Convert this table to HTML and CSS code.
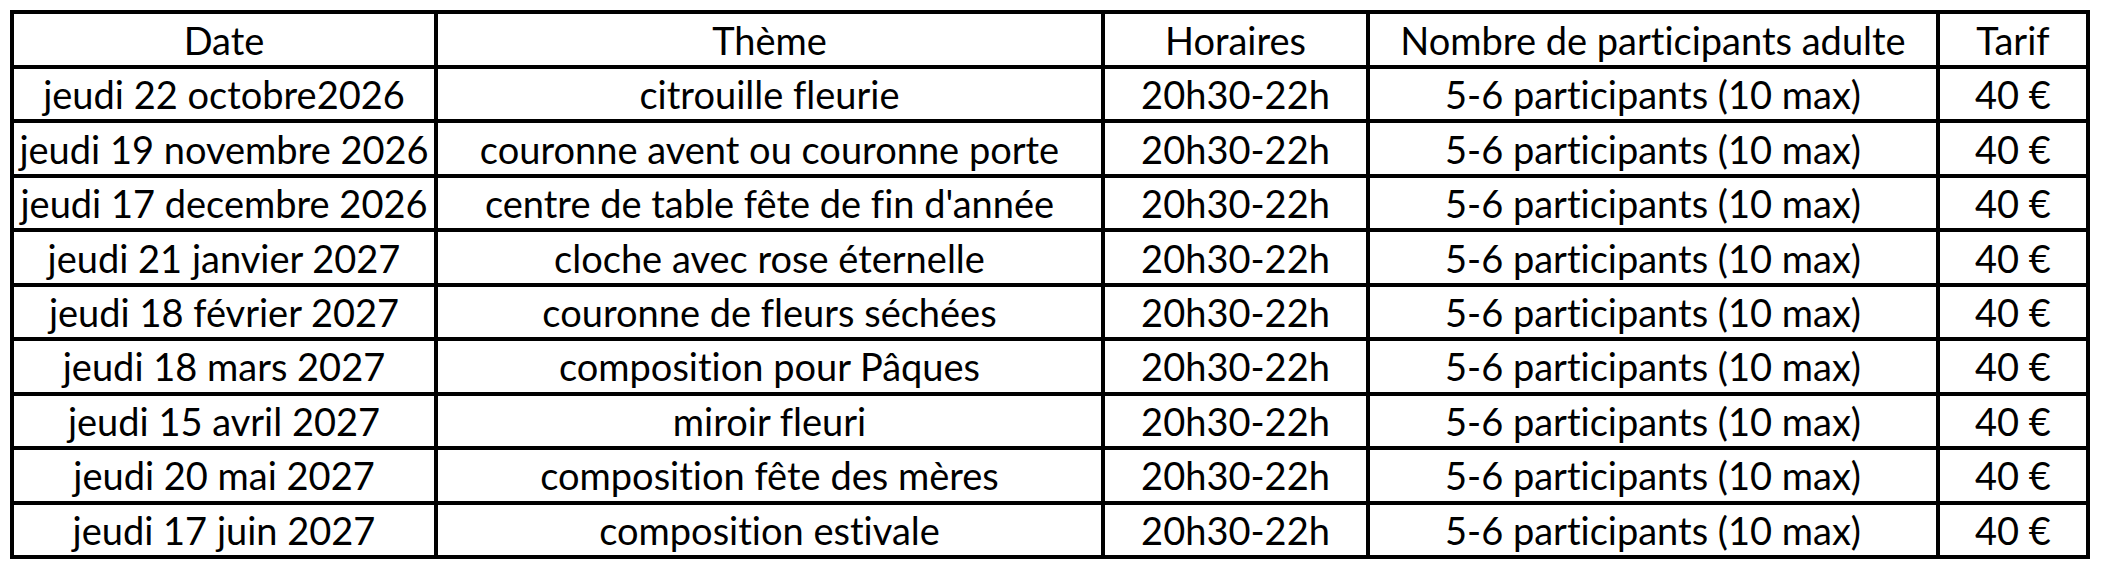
FILE: index.html
```html
<!DOCTYPE html>
<html lang="fr">
<head>
<meta charset="utf-8">
<title>Ateliers</title>
<link rel="stylesheet" href="styles.css">
</head>
<body>
<div class="page">
<table class="planning">
  <colgroup>
    <col class="c-date"><col class="c-theme"><col class="c-hor"><col class="c-nb"><col class="c-tarif">
  </colgroup>
  <thead>
    <tr><th>Date</th><th>Thème</th><th>Horaires</th><th>Nombre de participants adulte</th><th>Tarif</th></tr>
  </thead>
  <tbody>
    <tr><td>jeudi 22 octobre2026</td><td>citrouille fleurie</td><td>20h30-22h</td><td>5-6 participants (10 max)</td><td>40 €</td></tr>
    <tr><td>jeudi 19 novembre 2026</td><td>couronne avent ou couronne porte</td><td>20h30-22h</td><td>5-6 participants (10 max)</td><td>40 €</td></tr>
    <tr><td>jeudi 17 decembre 2026</td><td>centre de table fête de fin d'année</td><td>20h30-22h</td><td>5-6 participants (10 max)</td><td>40 €</td></tr>
    <tr><td>jeudi 21 janvier 2027</td><td>cloche avec rose éternelle</td><td>20h30-22h</td><td>5-6 participants (10 max)</td><td>40 €</td></tr>
    <tr><td>jeudi 18 février 2027</td><td>couronne de fleurs séchées</td><td>20h30-22h</td><td>5-6 participants (10 max)</td><td>40 €</td></tr>
    <tr><td>jeudi 18 mars 2027</td><td>composition pour Pâques</td><td>20h30-22h</td><td>5-6 participants (10 max)</td><td>40 €</td></tr>
    <tr><td>jeudi 15 avril 2027</td><td>miroir fleuri</td><td>20h30-22h</td><td>5-6 participants (10 max)</td><td>40 €</td></tr>
    <tr><td>jeudi 20 mai 2027</td><td>composition fête des mères</td><td>20h30-22h</td><td>5-6 participants (10 max)</td><td>40 €</td></tr>
    <tr><td>jeudi 17 juin 2027</td><td>composition estivale</td><td>20h30-22h</td><td>5-6 participants (10 max)</td><td>40 €</td></tr>
  </tbody>
</table>
</div>
</body>
</html>
```
FILE: styles.css
```css
html, body {
  margin: 0;
  padding: 0;
  background: #fff;
}
.page {
  padding: 10px 0 0 10px;
}
.planning {
  border-collapse: collapse;
  table-layout: fixed;
  width: 2080px;
  font-family: Lato, "Open Sans", sans-serif;
  font-size: 38px;
  font-variant-ligatures: none;
  color: #000;
}
.c-date { width: 424px; }
.c-theme { width: 667px; }
.c-hor { width: 265px; }
.c-nb { width: 570px; }
.c-tarif { width: 150px; }
.planning th,
.planning td {
  border: 4px solid #000;
  padding: 0;
  text-align: center;
  vertical-align: middle;
  font-weight: 400;
  white-space: nowrap;
  overflow: hidden;
  line-height: 1;
}
.planning thead tr { height: 55px; }
.planning tbody tr { height: 54.45px; }
```
